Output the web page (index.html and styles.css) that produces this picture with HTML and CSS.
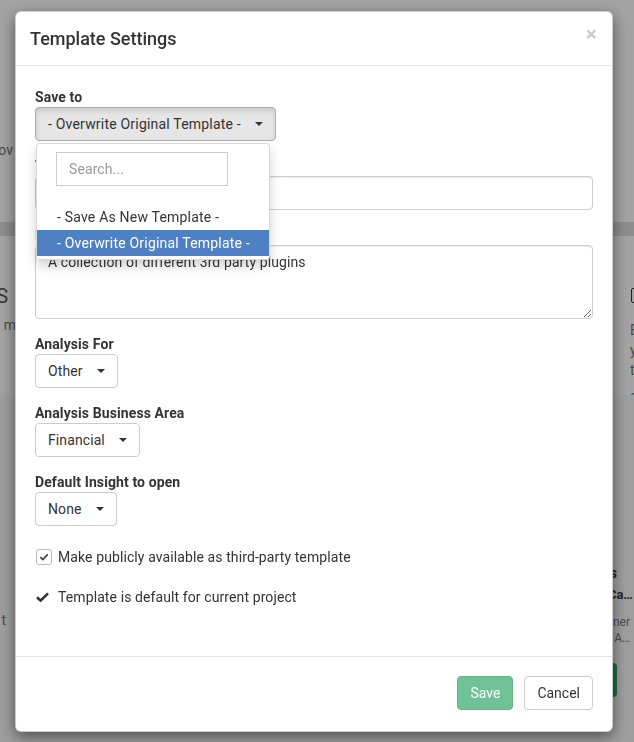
FILE: index.html
```html
<!DOCTYPE html>
<html lang="en">
<head>
    <meta charset="UTF-8">
    <meta name="viewport" content="width=device-width, initial-scale=1.0">
    <title>Template Settings</title>
    <link rel="stylesheet" href="styles.css">
</head>
<body>
    <!-- page behind the modal, only its edges show -->
    <div class="page">
        <div class="page-row row-top">
            <div class="peek-left">
                <div class="peek-text top-ov">ov</div>
            </div>
        </div>
        <div class="page-band"></div>
        <div class="page-row row-mid">
            <div class="peek-left">
                <div class="peek-title">S</div>
                <div class="peek-text mid-em">e m</div>
            </div>
            <div class="peek-right">
                <div class="peek-icon"></div>
                <div class="peek-line">Edit</div>
                <div class="peek-line">your</div>
                <div class="peek-line">templates</div>
                <div class="peek-link">configure</div>
            </div>
        </div>
        <div class="page-row row-low">
            <div class="peek-left">
                <div class="peek-text low-t">t</div>
            </div>
            <div class="peek-card">
                <div class="card-head">s</div>
                <div class="card-title">Ca…</div>
                <div class="card-meta first">ner</div>
                <div class="card-meta">A…</div>
                <div class="card-btn"></div>
            </div>
        </div>
    </div>

    <div class="backdrop"></div>

    <div class="modal">
        <div class="modal-dialog">
            <div class="modal-header">
                <h4 class="modal-title">Template Settings</h4>
                <button class="close" type="button">×</button>
            </div>

            <div class="modal-body">
                <div class="form-group">
                    <label>Save to</label>
                    <div class="select">
                        <button class="btn btn-select active" type="button">
                            <span>- Overwrite Original Template -</span>
                            <span class="caret"></span>
                        </button>
                        <div class="dropdown-menu">
                            <div class="searchbox">
                                <input type="text" placeholder="Search...">
                            </div>
                            <ul class="menu-list">
                                <li>- Save As New Template -</li>
                                <li class="selected">- Overwrite Original Template -</li>
                            </ul>
                        </div>
                    </div>
                </div>

                <div class="form-group">
                    <label>Template Name</label>
                    <input class="form-control" type="text" value="3rd Party Plugins">
                </div>

                <div class="form-group">
                    <label>Description</label>
                    <textarea class="form-control textarea">A collection of different 3rd party plugins</textarea>
                </div>

                <div class="form-group">
                    <label>Analysis For</label>
                    <div class="select">
                        <button class="btn btn-select" type="button">
                            <span>Other</span>
                            <span class="caret"></span>
                        </button>
                    </div>
                </div>

                <div class="form-group">
                    <label>Analysis Business Area</label>
                    <div class="select">
                        <button class="btn btn-select" type="button">
                            <span>Financial</span>
                            <span class="caret"></span>
                        </button>
                    </div>
                </div>

                <div class="form-group">
                    <label>Default Insight to open</label>
                    <div class="select">
                        <button class="btn btn-select" type="button">
                            <span>None</span>
                            <span class="caret"></span>
                        </button>
                    </div>
                </div>

                <div class="options">
                    <div class="option">
                        <span class="checkbox">
                            <svg width="10" height="8" viewBox="0 0 10 8">
                                <polyline points="1.2,4.2 3.8,6.6 8.8,1.4" fill="none" stroke="#444" stroke-width="1.8"/>
                            </svg>
                        </span>
                        Make publicly available as third-party template
                    </div>
                    <div class="option">
                        <span class="check-icon">
                            <svg width="13" height="10" viewBox="0 0 13 10">
                                <polyline points="1,5.2 4.6,8.6 12,1.4" fill="none" stroke="#333" stroke-width="2.6"/>
                            </svg>
                        </span>
                        Template is default for current project
                    </div>
                </div>
            </div>

            <div class="modal-footer">
                <button class="btn btn-save" type="button" disabled>Save</button>
                <button class="btn btn-cancel" type="button">Cancel</button>
            </div>
        </div>
    </div>
</body>
</html>
```

FILE: styles.css
```css
html, body {
    margin: 0;
    height: 100%;
    overflow: hidden;
}

body {
    font-family: Roboto, "Liberation Sans", sans-serif;
    font-size: 14px;
    line-height: 20px;
    color: #333;
    background-color: #fff;
}

/* Page behind the modal */
.page {
    height: 742px;
    overflow: hidden;
}

.page-row {
    display: flex;
    justify-content: space-between;
}

.row-top {
    height: 222px;
}

.page-band {
    height: 14px;
    background-color: #dedede;
}

.row-mid {
    height: 159px;
}

.row-low {
    height: 347px;
    background-color: #f8f8f8;
}

.peek-left {
    width: 16px;
    display: flex;
    flex-direction: column;
    align-items: flex-end;
    overflow: hidden;
    color: #777;
}

.peek-text {
    white-space: nowrap;
}

.top-ov {
    margin: 140px 3px 0 0;
}

.peek-title {
    margin: 48px 8px 0 0;
    font-size: 20px;
    line-height: 24px;
    color: #555;
}

.mid-em {
    margin: 7px 0 0 0;
}

.low-t {
    margin: 215px 10px 0 0;
}

.peek-right {
    width: 4px;
    overflow: hidden;
    color: #777;
    white-space: nowrap;
}

.peek-icon {
    width: 14px;
    height: 13px;
    margin: 52px 0 17px 1px;
    border: 1.5px solid #333;
    border-radius: 2px;
}

.peek-link {
    margin-top: 6px;
    color: #5a5ae0;
}

.peek-card {
    width: 60px;
    text-align: right;
    white-space: nowrap;
}

.card-head {
    margin: 168px 17px 0 0;
    font-weight: 700;
}

.card-title {
    margin: 2px 1px 0 0;
    font-size: 13px;
    font-weight: 700;
}

.card-meta {
    margin-right: 4px;
    font-size: 12px;
    line-height: 16px;
    color: #777;
}

.card-meta.first {
    margin-top: 9px;
}

.card-btn {
    width: 40px;
    height: 34px;
    margin: 17px 17px 0 auto;
    border-radius: 4px;
    background-color: #2ea866;
}

.backdrop {
    position: fixed;
    inset: 0;
    background-color: rgba(0, 0, 0, 0.36);
}

/* Modal */
.modal {
    position: fixed;
    inset: 0;
}

.modal-dialog {
    width: 598px;
    margin: 11px 0 0 15px;
    box-sizing: border-box;
    background-color: #fff;
    border: 1px solid rgba(0, 0, 0, 0.2);
    border-radius: 6px;
    box-shadow: 0 5px 15px rgba(0, 0, 0, 0.5);
}

.modal-header {
    display: flex;
    justify-content: space-between;
    align-items: flex-start;
    padding: 14px 15px 14px 14px;
    border-bottom: 1px solid #e5e5e5;
}

.modal-title {
    margin: 0;
    font-size: 18px;
    font-weight: 500;
    line-height: 25px;
}

.close {
    padding: 0;
    margin-top: -2px;
    border: 0;
    background: none;
    font-family: inherit;
    font-size: 21px;
    font-weight: 700;
    line-height: 20px;
    color: #000;
    opacity: 0.2;
    cursor: pointer;
}

.modal-body {
    padding: 21px 19px 49px 19px;
    letter-spacing: 0.1px;
}

.form-group {
    margin-bottom: 15px;
}

.form-group label {
    display: block;
    font-weight: 700;
}

.select {
    position: relative;
}

.btn {
    display: inline-flex;
    align-items: center;
    box-sizing: border-box;
    height: 34px;
    padding: 6px 12px;
    font-family: inherit;
    font-size: 14px;
    line-height: 20px;
    letter-spacing: inherit;
    color: #333;
    background-color: #fff;
    border: 1px solid #ccc;
    border-radius: 4px;
    cursor: pointer;
}

.btn-select {
    gap: 14px;
}

.btn-select.active {
    background-color: #e6e6e6;
    border-color: #adadad;
    box-shadow: inset 0 3px 5px rgba(0, 0, 0, 0.125);
    letter-spacing: 0.2px;
}

.caret {
    width: 0;
    height: 0;
    border-top: 4px solid #333;
    border-left: 4px solid transparent;
    border-right: 4px solid transparent;
}

.dropdown-menu {
    position: absolute;
    top: 36px;
    left: 1px;
    z-index: 2;
    width: 234px;
    box-sizing: border-box;
    padding: 5px 0 3px;
    background-color: #fff;
    border: 1px solid rgba(0, 0, 0, 0.15);
    border-radius: 4px;
    box-shadow: 0 6px 12px rgba(0, 0, 0, 0.175);
}

.searchbox {
    padding: 3px 19px 0;
}

.searchbox input {
    display: block;
    width: 172px;
    height: 34px;
    box-sizing: border-box;
    padding: 6px 12px;
    font-family: inherit;
    font-size: 14px;
    letter-spacing: inherit;
    color: #333;
    border: 1px solid #ccc;
    border-radius: 0;
    outline: none;
}

.searchbox input::placeholder {
    color: #999;
}

.menu-list {
    list-style: none;
    margin: 18px 0 0;
    padding: 0;
    letter-spacing: 0.2px;
}

.menu-list li {
    padding: 3px 20px;
    white-space: nowrap;
}

.menu-list li.selected {
    background-color: #5080c4;
    color: #fff;
}

.form-control {
    display: block;
    width: 100%;
    height: 34px;
    box-sizing: border-box;
    padding: 6px 12px;
    font-family: inherit;
    font-size: 14px;
    line-height: 20px;
    letter-spacing: inherit;
    color: #333;
    background-color: #fff;
    border: 1px solid #ccc;
    border-radius: 4px;
    box-shadow: inset 0 1px 1px rgba(0, 0, 0, 0.075);
}

.textarea {
    height: 74px;
}

.options {
    display: flex;
    flex-direction: column;
    gap: 20px;
    padding-top: 6px;
}

.option {
    display: flex;
    align-items: center;
    gap: 6px;
    padding-left: 1px;
}

.checkbox {
    display: flex;
    align-items: center;
    justify-content: center;
    width: 16px;
    height: 16px;
    box-sizing: border-box;
    border: 1px solid #bbb;
    border-radius: 3px;
}

.check-icon {
    display: flex;
    width: 16px;
}

.modal-footer {
    display: flex;
    justify-content: flex-end;
    gap: 11px;
    padding: 19px 19px 21px;
    border-top: 1px solid #e5e5e5;
}

.btn-save {
    color: #fff;
    background-color: #6fc296;
    border-color: #62b488;
    cursor: not-allowed;
}

.btn-cancel {
    background-color: #fff;
}
```
